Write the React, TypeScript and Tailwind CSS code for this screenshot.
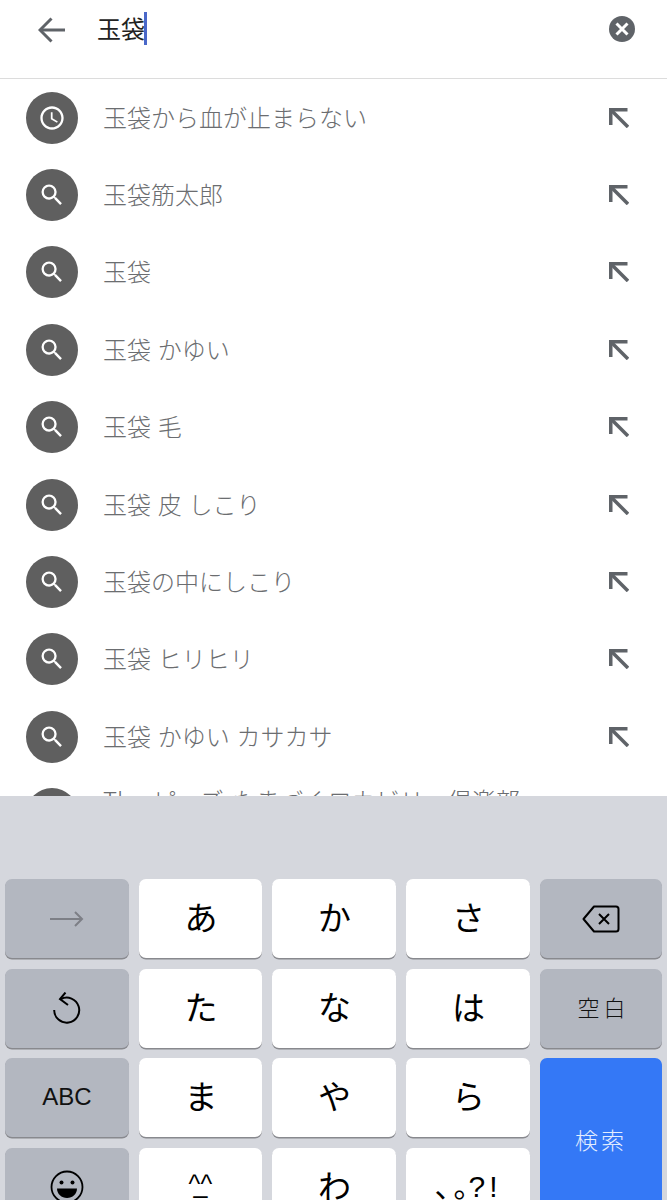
import React from 'react';

const font = { fontFamily: '"Noto Sans CJK JP", "Noto Sans", sans-serif' };

const rows = [
  { text: '玉袋から血が止まらない', history: true },
  { text: '玉袋筋太郎' },
  { text: '玉袋' },
  { text: '玉袋 かゆい' },
  { text: '玉袋 毛' },
  { text: '玉袋 皮 しこり' },
  { text: '玉袋の中にしこり' },
  { text: '玉袋 ヒリヒリ' },
  { text: '玉袋 かゆい カサカサ' },
  { text: 'The ピーズ たまづくロカビリー倶楽部', raised: true },
];

const ClockIcon = () => (
  <svg viewBox="0 0 24 24" className="w-[28px] h-[28px] fill-white">
    <path d="M11.99 2C6.47 2 2 6.48 2 12s4.47 10 9.99 10C17.52 22 22 17.52 22 12S17.52 2 11.99 2zM12 20c-4.42 0-8-3.58-8-8s3.58-8 8-8 8 3.58 8 8-3.58 8-8 8z" />
    <path d="M12.5 7H11v6l5.25 3.15.75-1.23-4.5-2.67z" />
  </svg>
);

const SearchIcon = () => (
  <svg viewBox="0 0 24 24" className="w-[28px] h-[28px] fill-white">
    <path d="M15.5 14h-.79l-.28-.27A6.471 6.471 0 0 0 16 9.5 6.5 6.5 0 1 0 9.5 16c1.61 0 3.09-.59 4.23-1.57l.27.28v.79l5 4.99L20.49 19l-4.99-5zm-6 0C7.01 14 5 11.99 5 9.5S7.01 5 9.5 5 14 7.01 14 9.5 11.99 14 9.5 14z" />
  </svg>
);

const FillArrow = () => (
  <svg viewBox="0 0 20 20" className="w-[20px] h-[20px] fill-none stroke-[#5f6368]" strokeWidth="3.5">
    <path d="M1.750 17V1.750H18.500" />
    <path d="M2.500 2.500L19 19" />
  </svg>
);

const Row = ({ text, history, raised }: { text: string; history?: boolean; raised?: boolean }) => (
  <div className="h-[77.4px] shrink-0 flex items-center">
    <div className="ml-[26px] w-[52px] h-[52px] rounded-full bg-[#5f5f5f] flex items-center justify-center shrink-0">
      {history ? <ClockIcon /> : <SearchIcon />}
    </div>
    {/* long entries wrap in the real list, only the first line shows above the keyboard */}
    <div
      className={`ml-[25px] flex-1 text-[24px] leading-[32px] font-light text-[#6b6d70] whitespace-nowrap ${
        raised ? 'self-start mt-[8px] [word-spacing:3.5px]' : 'mb-[2px] [word-spacing:1.5px]'
      }`}
    >
      {text}
    </div>
    {!raised && (
      <div className="mr-[38px] shrink-0">
        <FillArrow />
      </div>
    )}
  </div>
);

const Key = ({ children, kind = 'char', className = '' }: { children: React.ReactNode; kind?: 'char' | 'fn' | 'go'; className?: string }) => {
  const bg =
    kind === 'char' ? 'bg-white' : kind === 'fn' ? 'bg-[#b3b7c0]' : 'bg-[#3478f6]';
  return (
    <div className={`${bg} rounded-[7px] shadow-[0_1.5px_0_#88898e] flex items-center justify-center text-black ${className}`}>
      {children}
    </div>
  );
};

const Kana = ({ children }: { children: React.ReactNode }) => (
  <span className="text-[33px] leading-none mb-[4px] ml-[1px]">{children}</span>
);

export default function App() {
  return (
    <div className="w-[667px] h-[1200px] overflow-hidden bg-white flex flex-col" style={font}>
      <div className="h-[79px] shrink-0 border-b border-[#dcdcdc] flex items-start">
        <svg viewBox="0 0 28 26" className="ml-[38px] mt-[17px] w-[28px] h-[26px] fill-none stroke-[#5f6368]" strokeWidth="3">
          <path d="M13.5 1.5L2 13l11.5 11.5" />
          <path d="M2.5 13H27" />
        </svg>
        <div className="ml-[31px] mt-[12px] h-[33px] flex items-center text-[24px] leading-none text-[#222]">
          <span className="mb-[2px]">玉袋</span>
          <div className="w-[3px] h-[33px] bg-[#4a68c9] -ml-[1px]" />
        </div>
        <div className="ml-auto mr-[32px] mt-[16px] w-[26px] h-[26px] rounded-full bg-[#5f6368] flex items-center justify-center">
          <svg viewBox="0 0 14 14" className="w-[14px] h-[14px] fill-none stroke-white" strokeWidth="3">
            <path d="M1.500 1.500l11 11M12.500 1.500l-11 11" />
          </svg>
        </div>
      </div>

      <div className="h-[717px] shrink-0 overflow-hidden flex flex-col">
        {rows.map((r) => (
          <Row key={r.text} text={r.text} history={r.history} raised={r.raised} />
        ))}
      </div>

      <div className="flex-1 bg-[#d5d7dd] pt-[83px] pl-[5px] overflow-hidden">
        <div className="grid grid-cols-[124px_123px_124px_124px_122px] gap-x-[10px] auto-rows-[79px] gap-y-[10.5px]">
          <Key kind="fn">
            <svg viewBox="0 0 34 16" className="w-[34px] h-[16px] fill-none stroke-[#7d7f86]" strokeWidth="2">
              <path d="M0 8h32M25 1l7 7-7 7" />
            </svg>
          </Key>
          <Key><Kana>あ</Kana></Key>
          <Key><Kana>か</Kana></Key>
          <Key><Kana>さ</Kana></Key>
          <Key kind="fn">
            <svg viewBox="0 0 38 28" className="w-[38px] h-[28px] fill-none stroke-black" strokeWidth="2">
              <path d="M12 1.500h22a2.500 2.500 0 0 1 2.500 2.500v20a2.500 2.500 0 0 1-2.500 2.500H12L1.500 14z" strokeLinejoin="round" />
              <path d="M17 9l10 10M27 9l-10 10" />
            </svg>
          </Key>

          <Key kind="fn">
            <svg viewBox="0 0 28 32" className="w-[28px] h-[32px] fill-none stroke-black" strokeWidth="2">
              <path d="M8 7A12.500 12.500 0 1 1 1.200 18" />
              <path d="M12.500 0.500L7 7l8 6" />
            </svg>
          </Key>
          <Key><Kana>た</Kana></Key>
          <Key><Kana>な</Kana></Key>
          <Key><Kana>は</Kana></Key>
          <Key kind="fn"><span className="text-[22px] font-light tracking-[4px] pl-[5px] mb-[4px] text-[#111]">空白</span></Key>

          <Key kind="fn"><span className="text-[24px] mb-[2px] text-[#111]" style={{ fontFamily: '"Liberation Sans", sans-serif' }}>ABC</span></Key>
          <Key><Kana>ま</Kana></Key>
          <Key><Kana>や</Kana></Key>
          <Key><Kana>ら</Kana></Key>
          <Key kind="go" className="row-span-2 pb-[6px]"><span className="text-[23px] tracking-[3px] text-[#e3edff] font-light">検索</span></Key>

          <Key kind="fn">
            <svg viewBox="0 0 34 34" className="w-[34px] h-[34px] fill-none stroke-black" strokeWidth="1.800">
              <circle cx="17" cy="17" r="15.500" />
              <circle cx="11.500" cy="12.500" r="2" fill="#000" stroke="none" />
              <circle cx="22.500" cy="12.500" r="2" fill="#000" stroke="none" />
              <path d="M7 18.500h20c0 5.500-4.500 9.500-10 9.500S7 24 7 18.500z" fill="#000" stroke="none" />
            </svg>
          </Key>
          <Key><span className="text-[25px] leading-none tracking-[-6.75px] pr-[7px] mb-[5px]" style={{ fontFamily: '"Liberation Sans", sans-serif' }}>^_^</span></Key>
          <Key><Kana>わ</Kana></Key>
          <Key>
            <span className="text-[30px] leading-none whitespace-nowrap mb-[4px] flex items-baseline">
              <span className="tracking-[4px] -mr-[19px]">、。</span>
              <span className="tracking-[4px]" style={{ fontFamily: '"Liberation Sans", sans-serif' }}>?!</span>
            </span>
          </Key>
        </div>
      </div>
    </div>
  );
}
